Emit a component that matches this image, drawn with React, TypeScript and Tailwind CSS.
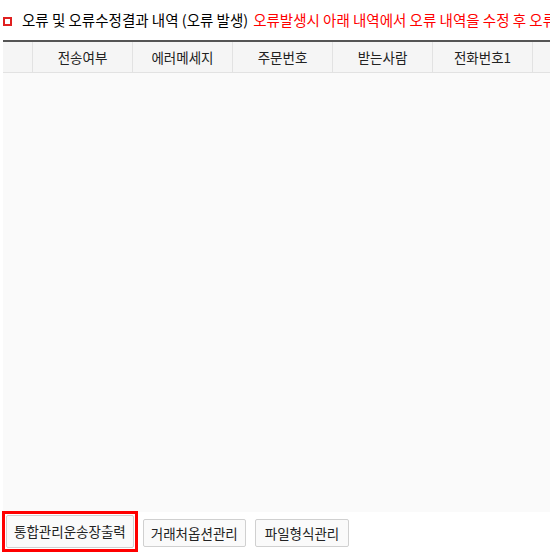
const columns = ["전송여부", "에러메세지", "주문번호", "받는사람", "전화번호1"];

const buttons = ["거래처옵션관리", "파일형식관리"];

export default function App() {
  return (
    <div
      className="w-[550px] h-[555px] overflow-hidden bg-white pl-[3px]"
      style={{ fontFamily: '"Noto Sans CJK KR", "Noto Sans", sans-serif' }}
    >
      <div className="flex items-center h-[40px] whitespace-nowrap">
        <span className="w-[9px] h-[9px] border-2 border-[#e02020] shrink-0 mt-[2px]" />
        <span className="ml-[10px] text-[14.5px] text-[#000]">오류 및 오류수정결과 내역 (오류 발생)</span>
        <span className="ml-[5px] text-[14.5px] text-[#ff0000]">오류발생시 아래 내역에서 오류 내역을 수정 후 오류</span>
      </div>

      <div className="border-t-[2px] border-[#555]">
        <div className="flex h-[31px] bg-[#f5f5f5] border-b border-[#e2e2e2] text-[13.5px] text-[#222]">
          <div className="w-[30px] shrink-0 border-r border-[#e2e2e2]" />
          {columns.map((c) => (
            <div
              key={c}
              className="w-[100px] shrink-0 border-r border-[#e2e2e2] flex items-center justify-center"
            >
              {c}
            </div>
          ))}
          <div className="flex-1" />
        </div>
        <div className="h-[439px] bg-[#fafafa]" />
      </div>

      <div className="flex items-start -mt-[1px] text-[13.5px] text-[#222]">
        <div className="-ml-[1px] border-[3px] border-[#ff0000] p-[1px] mr-[5px]">
          <button className="block h-[33px] px-[7px] bg-[#fafafa] border border-[#d0d0d0] rounded-[2px]">
            통합관리운송장출력
          </button>
        </div>
        <button className="h-[28px] mt-[8px] mr-[9px] px-[7px] bg-[#fafafa] border border-[#d0d0d0] rounded-[2px]">
          {buttons[0]}
        </button>
        <button className="h-[28px] mt-[8px] px-[9px] bg-[#fafafa] border border-[#d0d0d0] rounded-[2px]">
          {buttons[1]}
        </button>
      </div>
    </div>
  );
}
